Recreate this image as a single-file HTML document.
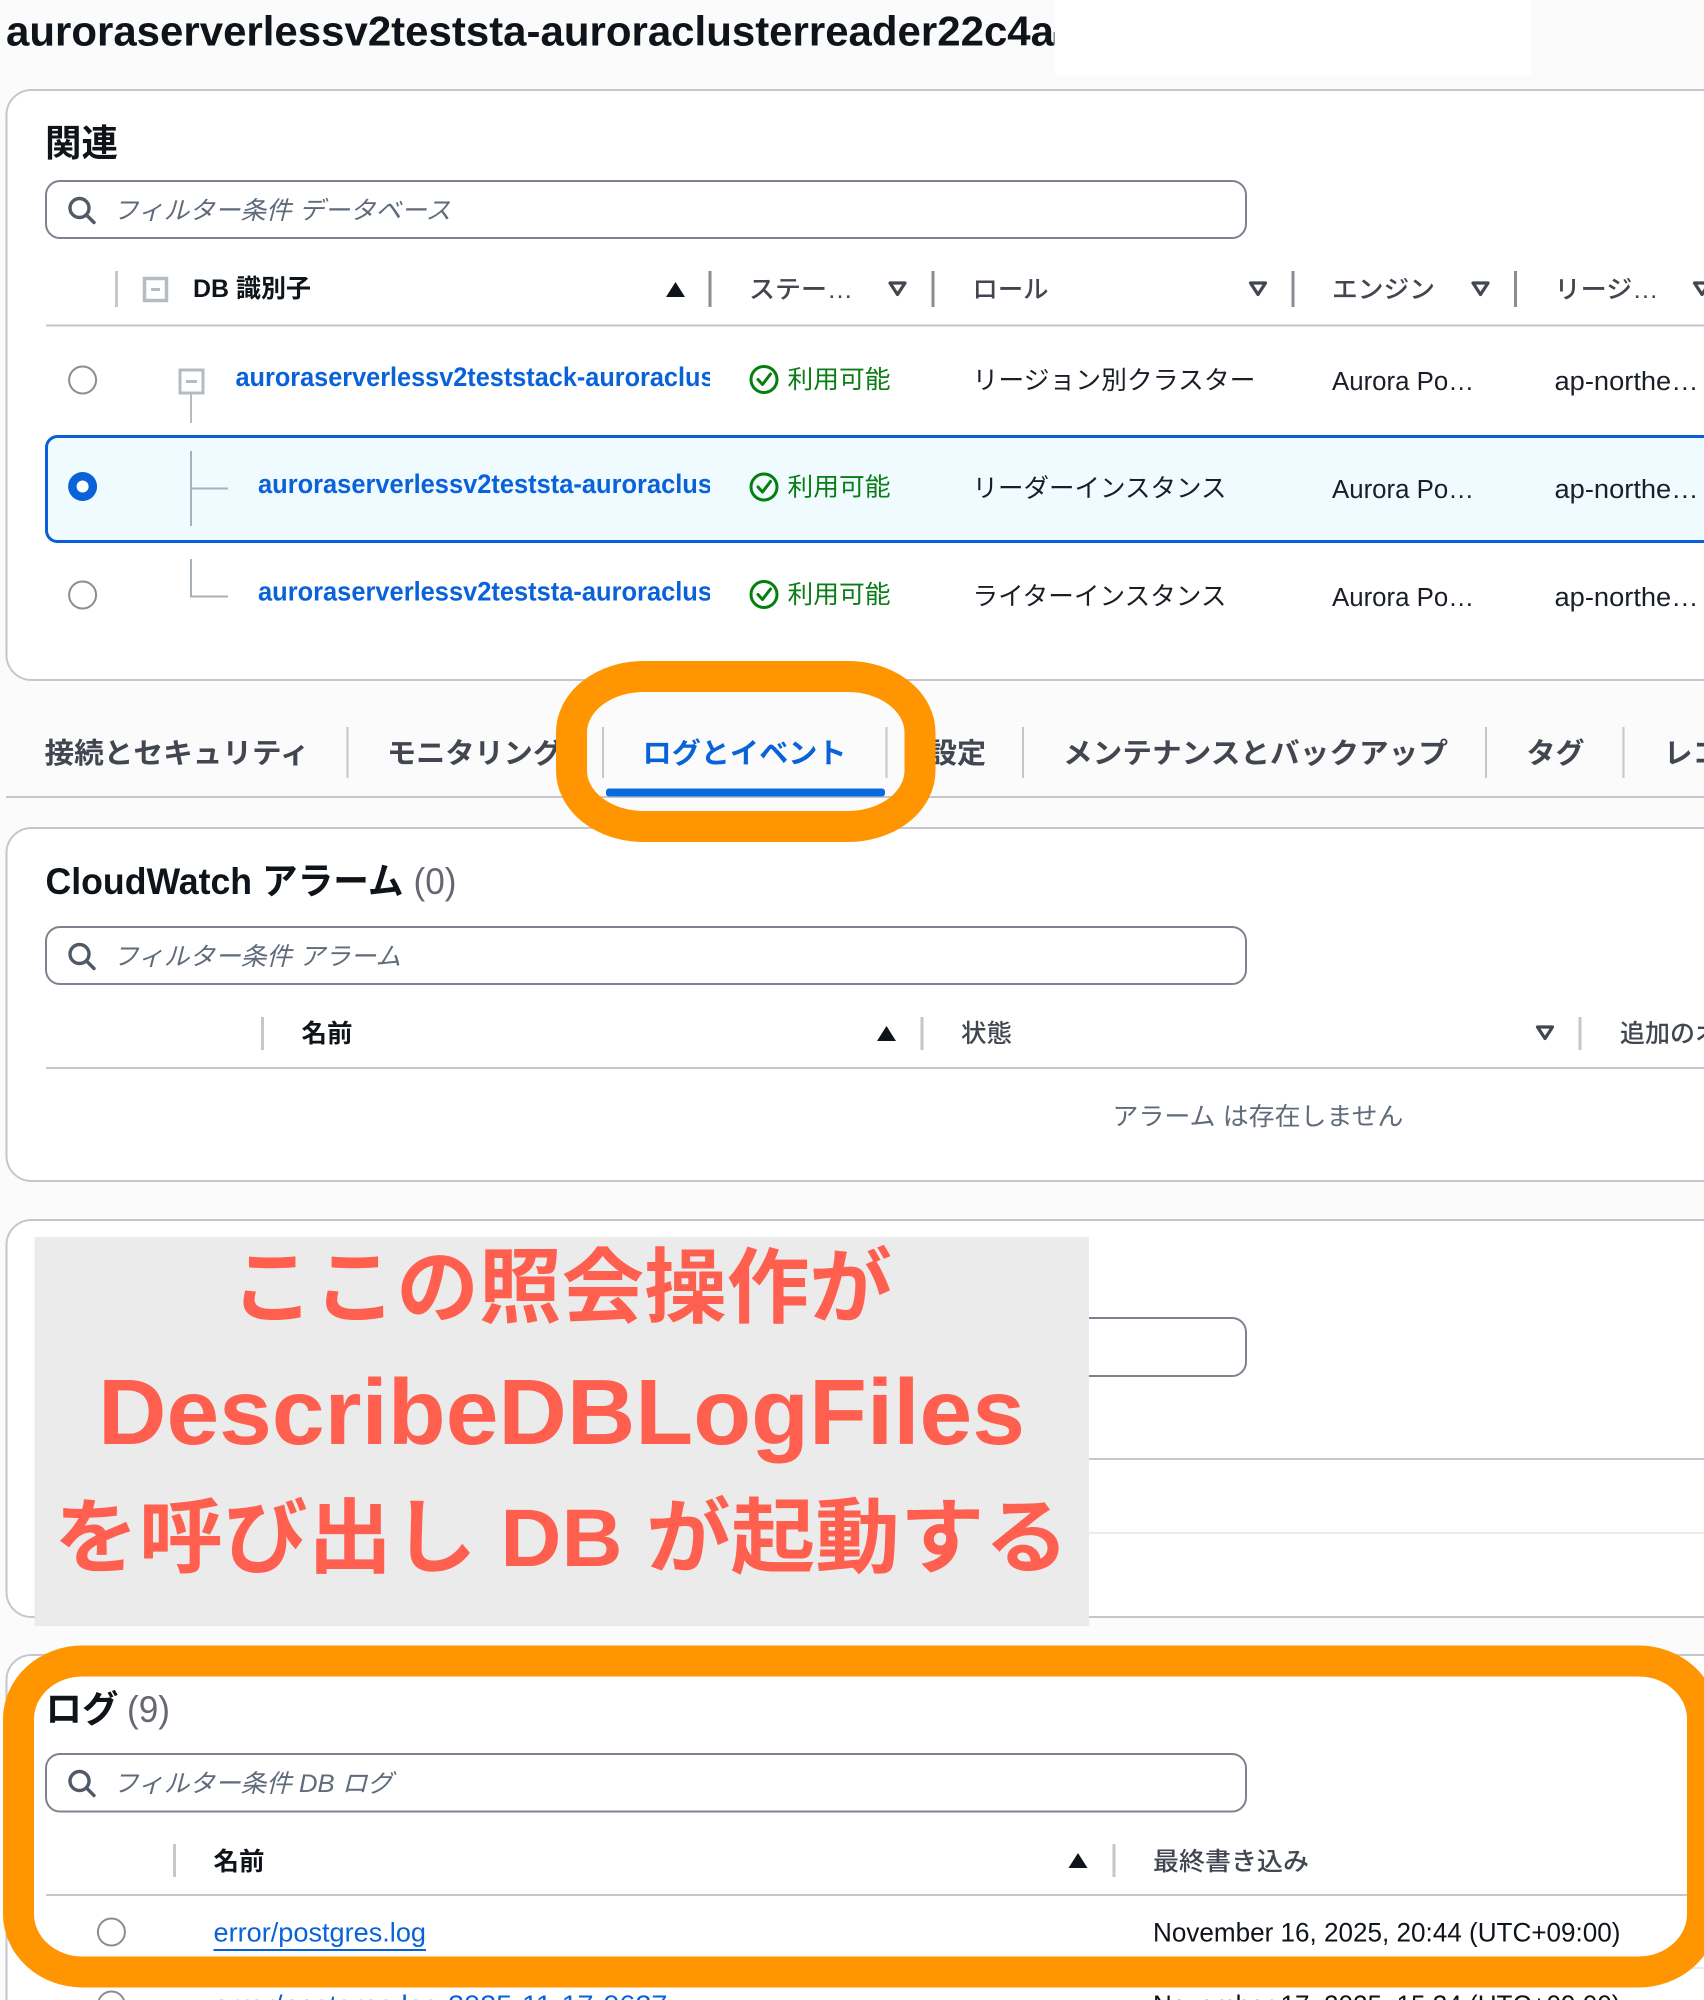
<!DOCTYPE html>
<html lang="ja"><head><meta charset="utf-8"><title>Aurora</title>
<style>
html,body{margin:0;padding:0;background:#fbfbfb;width:1704px;height:2000px;overflow:hidden}
svg{display:block;position:absolute;left:0;top:0}
text{font-family:"Liberation Sans","Noto Sans CJK JP",sans-serif;white-space:pre}
.h{font-size:37px;font-weight:700;fill:#0f141a}
.cnt{font-size:37px;font-weight:400;fill:#656871}
.ph{font-size:25px;font-style:italic;fill:#5f6b7a}
.th{font-size:25px;font-weight:700;fill:#0f141a}
.th2{font-size:25px;font-weight:500;fill:#424650}
.lnk{font-size:26.5px;font-weight:700;fill:#0a62d9}
.st{font-size:25px;fill:#0a7d16}
.td{font-size:25.5px;fill:#1a1f27}
.tab{font-size:28.5px;font-weight:700;fill:#424650}
.big{font-size:82px;font-weight:700;fill:#ff5f4e}
</style></head><body>
<svg width="1704" height="2000" viewBox="0 0 1704 2000" xmlns="http://www.w3.org/2000/svg">
<defs>
<clipPath id="c1"><rect x="0" y="300" width="710" height="340"/></clipPath>
<g id="srch" fill="none" stroke="#505a66" stroke-width="3.4" stroke-linecap="round"><circle cx="0" cy="0" r="9.5"/><path d="M7 7L14.5 14.5"/></g>
<g id="chk" fill="none" stroke="#037f0c" stroke-width="3"><circle cx="0" cy="0" r="13"/><path d="M-6 0L-1.5 5L6.5 -5.5" stroke-linecap="round" stroke-linejoin="round"/></g>
<path id="up" d="M0 -7.5L9.5 7.5H-9.5Z" fill="#0f141a"/>
<path id="dn" d="M-7.5 -5.5H7.5L0 6Z" fill="none" stroke="#424650" stroke-width="3.2" stroke-linejoin="round"/>
</defs>
<rect width="1704" height="2000" fill="#fbfbfb"/>

<!-- title -->
<text x="6" y="45.5" font-size="42" font-weight="700" fill="#0f141a" textLength="1048" lengthAdjust="spacingAndGlyphs">auroraserverlessv2teststa-auroraclusterreader22c4a</text>
<rect x="1053.5" y="32" width="1.5" height="12" fill="#8a8f96"/>
<rect x="1055" y="0" width="476" height="75.5" fill="#ffffff"/>

<!-- panel 1 -->
<rect x="6.5" y="90" width="1800" height="590" rx="25" fill="#fff" stroke="#c6c6cd" stroke-width="2"/>
<text class="h" x="45" y="156" textLength="73" lengthAdjust="spacingAndGlyphs">関連</text>
<rect x="46" y="181" width="1200" height="57" rx="14" fill="#fff" stroke="#7d838e" stroke-width="2"/>
<use href="#srch" x="79.5" y="208"/>
<text class="ph" x="113" y="219" textLength="338" lengthAdjust="spacingAndGlyphs">フィルター条件 データベース</text>

<g stroke-width="3">
<path d="M116.5 271V307" stroke="#c6c6cd"/>
<path d="M710 271V307M933 271V307M1293 271V307M1515.5 271V307" stroke="#8c8c94"/>
</g>
<rect x="144.5" y="278.5" width="22" height="22" fill="#fff" stroke="#b4bcc2" stroke-width="3.5"/>
<path d="M151 289.5H160" stroke="#b4bcc2" stroke-width="3"/>
<text class="th" x="193" y="297" textLength="118" lengthAdjust="spacingAndGlyphs">DB 識別子</text>
<use href="#up" x="675.5" y="289.5"/>
<text class="th2" x="749" y="298" textLength="104" lengthAdjust="spacingAndGlyphs">ステー…</text>
<use href="#dn" x="897.5" y="288.5"/>
<text class="th2" x="972.5" y="298" textLength="76" lengthAdjust="spacingAndGlyphs">ロール</text>
<use href="#dn" x="1258" y="288.5"/>
<text class="th2" x="1332" y="298" textLength="103" lengthAdjust="spacingAndGlyphs">エンジン</text>
<use href="#dn" x="1480.5" y="288.5"/>
<text class="th2" x="1554.5" y="298" textLength="104" lengthAdjust="spacingAndGlyphs">リージ…</text>
<use href="#dn" x="1702" y="288.5"/>
<path d="M46 325.5H1704" stroke="#c6c6cd" stroke-width="2"/>

<!-- row 1 -->
<circle cx="82.6" cy="380" r="13.5" fill="#fff" stroke="#8c8c94" stroke-width="2"/>
<rect x="180" y="370" width="23" height="23" fill="#fff" stroke="#b4bcc2" stroke-width="3"/>
<path d="M186 381.5H197" stroke="#b4bcc2" stroke-width="3"/>
<path d="M191 393V423" stroke="#b4bcc2" stroke-width="2"/>
<text class="lnk" clip-path="url(#c1)" x="235.5" y="386" textLength="479" lengthAdjust="spacingAndGlyphs">auroraserverlessv2teststack-auroraclus</text>
<use href="#chk" x="764" y="379.5"/>
<text class="st" x="787.5" y="388" textLength="103" lengthAdjust="spacingAndGlyphs">利用可能</text>
<text class="td" x="972.5" y="389" textLength="283" lengthAdjust="spacingAndGlyphs">リージョン別クラスター</text>
<text class="td" x="1332" y="390" textLength="142" lengthAdjust="spacingAndGlyphs">Aurora Po…</text>
<text class="td" x="1554.5" y="390" textLength="144" lengthAdjust="spacingAndGlyphs">ap-northe…</text>

<!-- row 2 -->
<rect x="46.5" y="436.5" width="1800" height="105" rx="11" fill="#f0fbff" stroke="#0a5fd8" stroke-width="3"/>
<circle cx="82.6" cy="486.5" r="14.5" fill="#0a62d9"/><circle cx="82.6" cy="486.5" r="6" fill="#fff"/>
<path d="M191 451V526M191 488.5H228" stroke="#a8b0b8" stroke-width="2" fill="none"/>
<text class="lnk" clip-path="url(#c1)" x="258" y="493" textLength="454" lengthAdjust="spacingAndGlyphs">auroraserverlessv2teststa-auroraclus</text>
<use href="#chk" x="764" y="487"/>
<text class="st" x="787.5" y="495.5" textLength="103" lengthAdjust="spacingAndGlyphs">利用可能</text>
<text class="td" x="972.5" y="497" textLength="254" lengthAdjust="spacingAndGlyphs">リーダーインスタンス</text>
<text class="td" x="1332" y="498" textLength="142" lengthAdjust="spacingAndGlyphs">Aurora Po…</text>
<text class="td" x="1554.5" y="498" textLength="144" lengthAdjust="spacingAndGlyphs">ap-northe…</text>

<!-- row 3 -->
<circle cx="82.6" cy="595" r="13.5" fill="#fff" stroke="#8c8c94" stroke-width="2"/>
<path d="M191 559V596.5H228" stroke="#a8b0b8" stroke-width="2" fill="none"/>
<text class="lnk" clip-path="url(#c1)" x="258" y="600.5" textLength="454" lengthAdjust="spacingAndGlyphs">auroraserverlessv2teststa-auroraclus</text>
<use href="#chk" x="764" y="594.5"/>
<text class="st" x="787.5" y="603" textLength="103" lengthAdjust="spacingAndGlyphs">利用可能</text>
<text class="td" x="972.5" y="605" textLength="254" lengthAdjust="spacingAndGlyphs">ライターインスタンス</text>
<text class="td" x="1332" y="606" textLength="142" lengthAdjust="spacingAndGlyphs">Aurora Po…</text>
<text class="td" x="1554.5" y="606" textLength="144" lengthAdjust="spacingAndGlyphs">ap-northe…</text>

<!-- tabs -->
<path d="M347.5 727V778M603 727V778M886.5 727V778M1023 727V778M1486 727V778M1623.5 727V778" stroke="#c6c6cd" stroke-width="2"/>
<path d="M6 797H1704" stroke="#c6c6cd" stroke-width="2"/>
<text class="tab" x="44.5" y="763" textLength="265" lengthAdjust="spacingAndGlyphs">接続とセキュリティ</text>
<text class="tab" x="387" y="763" textLength="175" lengthAdjust="spacingAndGlyphs">モニタリング</text>
<text class="tab" x="642.5" y="763" textLength="204" lengthAdjust="spacingAndGlyphs" style="fill:#0a62d9">ログとイベント</text>
<text class="tab" x="928" y="763" textLength="58" lengthAdjust="spacingAndGlyphs">設定</text>
<text class="tab" x="1063" y="763" textLength="385" lengthAdjust="spacingAndGlyphs">メンテナンスとバックアップ</text>
<text class="tab" x="1526.5" y="763" textLength="58" lengthAdjust="spacingAndGlyphs">タグ</text>
<text class="tab" x="1664" y="763">レコメンデーション</text>
<rect x="606" y="788.5" width="279" height="8" rx="3" fill="#0a6be0"/>

<!-- panel 2 -->
<rect x="6.5" y="828" width="1800" height="353" rx="25" fill="#fff" stroke="#c6c6cd" stroke-width="2"/>
<text class="h" x="45.5" y="894" textLength="358" lengthAdjust="spacingAndGlyphs">CloudWatch アラーム</text>
<text class="cnt" x="413.5" y="894" textLength="43" lengthAdjust="spacingAndGlyphs">(0)</text>
<rect x="46" y="927" width="1200" height="57" rx="14" fill="#fff" stroke="#7d838e" stroke-width="2"/>
<use href="#srch" x="79.5" y="954"/>
<text class="ph" x="113" y="965" textLength="288" lengthAdjust="spacingAndGlyphs">フィルター条件 アラーム</text>
<path d="M262.5 1017V1050M922 1017V1050M1580 1017V1050" stroke="#c6c6cd" stroke-width="3"/>
<text class="th" x="301.5" y="1042" textLength="51" lengthAdjust="spacingAndGlyphs">名前</text>
<use href="#up" x="886.5" y="1033.5"/>
<text class="th2" x="961" y="1042" textLength="51" lengthAdjust="spacingAndGlyphs">状態</text>
<use href="#dn" x="1545" y="1032.5"/>
<text class="th2" x="1620" y="1042">追加のオプション</text>
<path d="M46 1068H1704" stroke="#c6c6cd" stroke-width="2"/>
<text x="1112.5" y="1125" font-size="25" fill="#5f6b7a" textLength="291" lengthAdjust="spacingAndGlyphs">アラーム は存在しません</text>

<!-- orange ring 1 -->
<rect x="571.5" y="676.5" width="348.5" height="150" rx="72" ry="56" fill="none" stroke="#ff9500" stroke-width="31"/>

<!-- panel 3 -->
<rect x="6.5" y="1220" width="1800" height="397" rx="25" fill="#fff" stroke="#c6c6cd" stroke-width="2"/>
<rect x="900" y="1318" width="346" height="58" rx="14" fill="#fff" stroke="#7d838e" stroke-width="2"/>
<path d="M900 1459H1704" stroke="#c6c6cd" stroke-width="2"/>
<path d="M900 1533H1704" stroke="#e9ebed" stroke-width="2"/>

<!-- annotation -->
<rect x="34.5" y="1237" width="1054.5" height="389" fill="#ebebeb"/>
<text class="big" x="231" y="1316" textLength="661" lengthAdjust="spacingAndGlyphs">ここの照会操作が</text>
<text class="big" x="98" y="1444" textLength="927" lengthAdjust="spacingAndGlyphs" style="font-size:93px">DescribeDBLogFiles</text>
<text class="big" x="54" y="1566" textLength="1015" lengthAdjust="spacingAndGlyphs">を呼び出し DB が起動する</text>

<!-- panel 4 -->
<rect x="6.5" y="1655" width="1800" height="400" rx="25" fill="#fff" stroke="#c6c6cd" stroke-width="2"/>
<text class="h" x="45.5" y="1722" textLength="73" lengthAdjust="spacingAndGlyphs">ログ</text>
<text class="cnt" x="127" y="1722" textLength="43" lengthAdjust="spacingAndGlyphs">(9)</text>
<rect x="46" y="1754" width="1200" height="57.5" rx="14" fill="#fff" stroke="#7d838e" stroke-width="2"/>
<use href="#srch" x="79.5" y="1781"/>
<text class="ph" x="113" y="1792" textLength="280" lengthAdjust="spacingAndGlyphs">フィルター条件 DB ログ</text>
<path d="M174.5 1844V1877M1114 1844V1877" stroke="#c6c6cd" stroke-width="3"/>
<text class="th" x="213.5" y="1870" textLength="51" lengthAdjust="spacingAndGlyphs">名前</text>
<use href="#up" x="1078" y="1860.5"/>
<text class="th2" x="1153" y="1870" textLength="156" lengthAdjust="spacingAndGlyphs">最終書き込み</text>
<path d="M46 1895H1704" stroke="#c6c6cd" stroke-width="2"/>
<circle cx="111.4" cy="1932" r="13.5" fill="#fff" stroke="#8c8c94" stroke-width="2"/>
<text x="213.5" y="1941.5" font-size="26.5" fill="#0a62d9" textLength="212.5" lengthAdjust="spacingAndGlyphs">error/postgres.log</text>
<path d="M213.5 1950H426" stroke="#0a62d9" stroke-width="2"/>
<text x="1153" y="1941.5" font-size="26.5" fill="#0f141a" textLength="467.5" lengthAdjust="spacingAndGlyphs">November 16, 2025, 20:44 (UTC+09:00)</text>
<path d="M46 1968H1704" stroke="#e9ebed" stroke-width="2"/>
<circle cx="111.4" cy="2005" r="13.5" fill="#fff" stroke="#8c8c94" stroke-width="2"/>
<text x="213.5" y="2014" font-size="26.5" fill="#0a62d9" textLength="454" lengthAdjust="spacingAndGlyphs">error/postgres.log.2025-11-17-0627</text>
<text x="1153" y="2014" font-size="26.5" fill="#0f141a" textLength="467.5" lengthAdjust="spacingAndGlyphs">November 17, 2025, 15:34 (UTC+09:00)</text>

<!-- orange ring 2 -->
<rect x="18.5" y="1661" width="1684" height="311" rx="64" ry="58" fill="none" stroke="#ff9500" stroke-width="31"/>
</svg>
</body></html>
